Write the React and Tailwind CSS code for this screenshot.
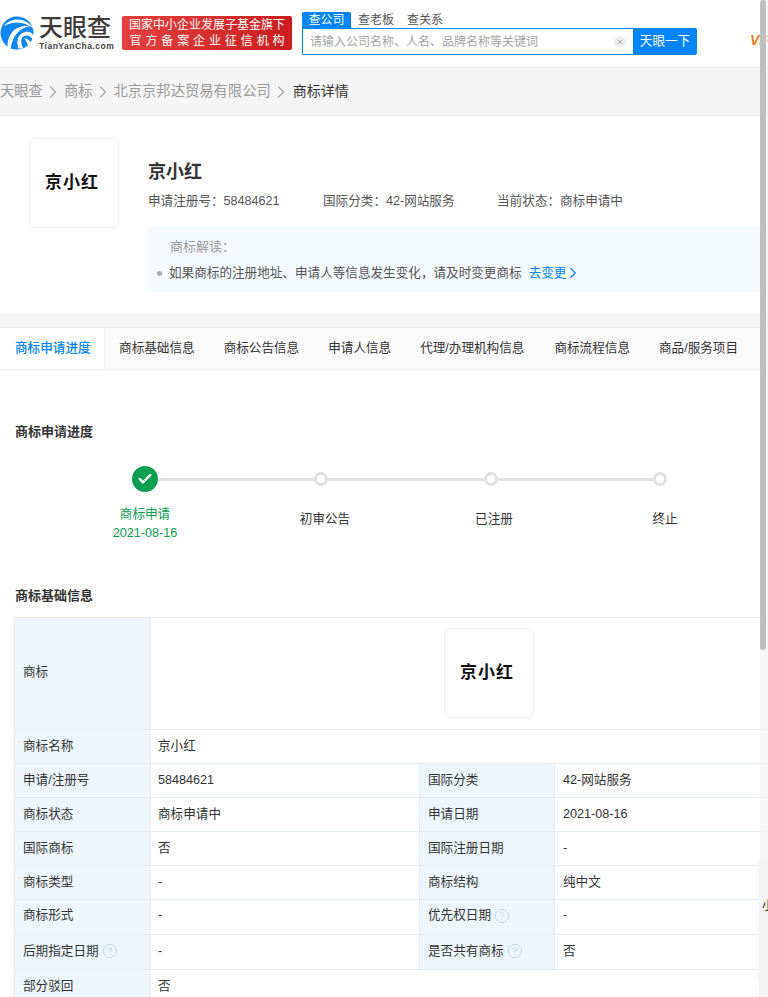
import React from 'react';
import { ChevronRight, CircleHelp, X, Check } from 'lucide-react';

const tabs = ['商标申请进度', '商标基础信息', '商标公告信息', '申请人信息', '代理/办理机构信息', '商标流程信息', '商品/服务项目'];

const rows = [
  ['申请/注册号', '58484621', '国际分类', '42-网站服务', 'h-[34px]', 'pb-px'],
  ['商标状态', '商标申请中', '申请日期', '2021-08-16', 'h-[34px]', 'pb-px'],
  ['国际商标', '否', '国际注册日期', '-', 'h-[34px]', 'pb-px'],
  ['商标类型', '-', '商标结构', '纯中文', 'h-[34px]', 'pb-px'],
  ['商标形式', '-', '优先权日期', '-', 'h-[35px]', 'pb-[3px]', 'right'],
  ['后期指定日期', '-', '是否共有商标', '否', 'h-[35px]', 'pb-[2px]', 'both'],
];

const Help = () => <CircleHelp size={16} strokeWidth={1.5} className="ml-[3px] text-[#bdd5ec] shrink-0" />;

const Logo = () => (
  <svg width="35" height="36" viewBox="0 0 36 36" className="shrink-0">
    <circle cx="17.5" cy="18" r="17" fill="#0f86f0" />
    <path d="M4 11C11 2 26 1 35 14C26 6 14 5 4 11z" fill="#fff" />
    <path d="M8 33C7 20 15 9 31 11C21 12 13 20 11 34z" fill="#fff" />
    <path d="M19 34C16 26 19 18 26 17C30 16 33 18 36 22L34 25C31 21 28 20 25 21C21 22 21 28 24 34z" fill="#fff" />
    <path d="M25 23C28 24 31 26 32 28L29 31z" fill="#fff" />
  </svg>
);

const TmBox = () => (
  <div className="w-[90px] h-[90px] rounded-[6px] border border-[#f0f0f0] bg-white flex items-center justify-center">
    <span className="text-[17px] font-bold text-[#111] tracking-[1px] mr-[4px]">京小红</span>
  </div>
);

const Label = ({ children, w }) => (
  <div className={`${w} shrink-0 bg-[#eef6fd] border-r border-[#e4ecf3] pl-[8px] flex items-center text-[#333]`}>{children}</div>
);

const Crumb = () => <ChevronRight size={20} strokeWidth={1.6} className="mx-[0.5px] text-[#aaa] shrink-0" />;

const App = () => {
  return (
    <div className="relative w-[768px] h-[997px] overflow-hidden bg-white text-[12.6px] text-[#333] font-['Liberation_Sans','Noto_Sans_CJK_SC',sans-serif]">
      {/* header */}
      <div className="h-[68px] flex items-start border-b border-[#ebebeb] overflow-hidden">
        <div className="flex items-center mt-[15px] w-[122px] shrink-0">
          <Logo />
          <div className="ml-[4px] flex flex-col items-start">
            <span className="text-[24px] leading-[26px] text-[#3f3a3a] font-medium">天眼查</span>
            <span className="text-[8.5px] leading-[10px] text-[#444] font-bold tracking-[0.5px]">TianYanCha.com</span>
          </div>
        </div>
        <div className="mt-[16px] w-[170px] h-[34px] shrink-0 rounded-[2px] bg-gradient-to-r from-[#e63f3f] to-[#cb1c1f] text-white flex flex-col items-center justify-center">
          <span className="text-[12px] leading-[16px] whitespace-nowrap">国家中小企业发展子基金旗下</span>
          <span className="text-[12px] leading-[16px] whitespace-nowrap tracking-[3.9px] ml-[4px]">官方备案企业征信机构</span>
        </div>
        <div className="ml-[10px] mt-[12px] w-[395px] shrink-0">
          <div className="flex h-[16px] items-center text-[12px] text-[#555]">
            <span className="w-[49px] h-[16px] bg-[#0084ff] text-white rounded-t-[2px] flex items-center justify-center">查公司</span>
            <span className="ml-[7px]">查老板</span>
            <span className="ml-[13px]">查关系</span>
          </div>
          <div className="flex h-[27px]">
            <div className="w-[331px] border border-r-0 border-[#0084ff] rounded-bl-[2px] flex items-center pl-[7px] pr-[7px] text-[12px] text-[#a3a3a3]">
              <span className="flex-1 whitespace-nowrap">请输入公司名称、人名、品牌名称等关键词</span>
              <span className="w-[12px] h-[12px] rounded-full bg-[#f0f0f0] flex items-center justify-center">
                <X size={8} strokeWidth={3} className="text-[#aaa]" />
              </span>
            </div>
            <div className="w-[64px] bg-[#0084ff] text-white rounded-r-[2px] flex items-center justify-center text-[12.6px]">天眼一下</div>
          </div>
        </div>
        <span className="ml-[53px] mt-[31px] text-[14px] leading-[18px] font-bold italic text-[#f57c20] whitespace-nowrap">VIP</span>
      </div>

      {/* breadcrumb */}
      <div className="h-[48px] bg-[#f5f5f5] border-b border-[#ebebeb] flex items-center text-[#999] text-[14.3px] whitespace-nowrap">
        <span>天眼查</span>
        <Crumb />
        <span>商标</span>
        <Crumb />
        <span>北京京邦达贸易有限公司</span>
        <Crumb />
        <span className="text-[#333] ml-[1px] text-[14px]">商标详情</span>
      </div>

      {/* summary */}
      <div className="h-[199px] flex pl-[29px] pt-[22px] border-b border-[#ebebeb]">
        <div className="shrink-0">
          <TmBox />
        </div>
        <div className="ml-[29px] flex-1">
          <div className="text-[18px] leading-[28px] font-bold text-[#333] mt-[20px]">京小红</div>
          <div className="flex mt-[5px] h-[20px] items-center text-[#555] whitespace-nowrap">
            <span className="w-[175px]">申请注册号：58484621</span>
            <span className="w-[174px]">国际分类：42-网站服务</span>
            <span>当前状态：商标申请中</span>
          </div>
          <div className="mt-[15px] h-[66px] bg-[#f5faff] pl-[8px] pt-[11px] text-[#555]">
            <div className="pl-[14px] h-[20px] leading-[20px] text-[#999] text-[13px]">商标解读：</div>
            <div className="flex items-center h-[20px] mt-[6px] whitespace-nowrap">
              <span className="w-[5px] h-[5px] rounded-full bg-[#aaa] mr-[7px] ml-px" />
              <span>如果商标的注册地址、申请人等信息发生变化，请及时变更商标</span>
              <span className="ml-[7px] text-[#0084ff]">去变更</span>
              <ChevronRight size={18} strokeWidth={1.6} className="text-[#0084ff] -ml-[2px]" />
            </div>
          </div>
        </div>
      </div>

      <div className="h-[13px] bg-[#f5f5f5] border-b border-[#ebebeb]" />

      {/* tabs */}
      <div className="h-[42px] flex bg-[#fafafa] border-b border-[#ededed] whitespace-nowrap">
        {tabs.map((t, i) => (
          <div
            key={t}
            className={
              i === 0
                ? 'pl-[15px] pr-[13px] bg-white text-[#0084ff] border-r border-[#ededed] flex items-center font-medium'
                : i === 5
                  ? 'pl-[15.5px] pr-[14.5px] flex items-center text-[#333]'
                  : 'px-[14.5px] flex items-center text-[#333]'
            }
          >
            {t}
          </div>
        ))}
      </div>

      {/* progress */}
      <div className="pl-[15px] mt-[52px] text-[13px] leading-[20px] font-bold text-[#333]">商标申请进度</div>
      <div className="flex items-center pl-[132px] mt-[24px] h-[26px]">
        <span className="w-[26px] h-[26px] rounded-full bg-[#0c9e51] flex items-center justify-center shrink-0">
          <Check size={16} strokeWidth={3.5} className="text-white" />
        </span>
        <span className="w-[156px] h-[3px] bg-[#e0e0e0]" />
        <span className="w-[14px] h-[14px] rounded-full border-[3px] border-[#e0e0e0] bg-white shrink-0" />
        <span className="w-[156px] h-[3px] bg-[#e0e0e0]" />
        <span className="w-[14px] h-[14px] rounded-full border-[3px] border-[#e0e0e0] bg-white shrink-0" />
        <span className="w-[155px] h-[3px] bg-[#e0e0e0]" />
        <span className="w-[14px] h-[14px] rounded-full border-[3px] border-[#e0e0e0] bg-white shrink-0" />
      </div>
      <div className="flex items-start pl-[85px] mt-[13px] text-center">
        <div className="w-[120px] text-[#0c9e51] leading-[19px]">
          <div>商标申请</div>
          <div>2021-08-16</div>
        </div>
        <div className="w-[120px] ml-[60px] mt-[5px] leading-[19px]">初审公告</div>
        <div className="w-[120px] ml-[49px] mt-[5px] leading-[19px]">已注册</div>
        <div className="w-[120px] ml-[51px] mt-[5px] leading-[19px]">终止</div>
      </div>

      {/* table */}
      <div className="pl-[15px] mt-[43px] text-[13px] leading-[20px] font-bold text-[#333]">商标基础信息</div>
      <div className="ml-[14px] mt-[11px] w-[900px] border-t border-l border-[#e4ecf3]">
        <div className="flex h-[112px] border-b border-[#e4ecf3]">
          <Label w="w-[136px] pb-[2px]">商标</Label>
          <div className="w-[676px] pb-[2px] flex items-center justify-center">
            <TmBox />
          </div>
        </div>
        <div className="flex h-[34px] border-b border-[#e4ecf3]">
          <Label w="w-[136px]">商标名称</Label>
          <div className="pl-[7px] flex items-center">京小红</div>
        </div>
        {rows.map(([a, b, c, d, h, pad, help]) => (
          <div key={a} className={`flex border-b border-[#e4ecf3] ${h}`}>
            <Label w={`w-[136px] ${pad}`}>
              {a}
              {help === 'both' && <Help />}
            </Label>
            <div className={`w-[268px] pl-[7px] flex items-center ${pad}`}>{b}</div>
            <Label w={`w-[136px] border-l ${pad}`}>
              {c}
              {help && <Help />}
            </Label>
            <div className={`pl-[8px] flex items-center ${pad}`}>{d}</div>
          </div>
        ))}
        <div className="flex h-[35px]">
          <Label w="w-[136px] pb-[3px]">部分驳回</Label>
          <div className="pl-[7px] pb-[3px] flex items-center">否</div>
        </div>
      </div>

      {/* right rail */}
      <div className="absolute right-0 top-0 w-[8px] h-full bg-[#f3f3f3]/70">
        <div className="w-[6px] h-[650px] rounded-[3px] bg-[#bfbfbf]" />
      </div>
      <div className="absolute right-0 top-[860px] w-[9px] h-[137px] bg-[#f3f3f3] shadow-[-3px_0_5px_rgba(0,0,0,0.03)] overflow-hidden text-[12px] whitespace-nowrap pl-[3px] pt-[37px]">小</div>
      <div className="absolute right-[9px] top-[982px] w-[14px] h-[15px] bg-white" />
    </div>
  );
};

export default App;
